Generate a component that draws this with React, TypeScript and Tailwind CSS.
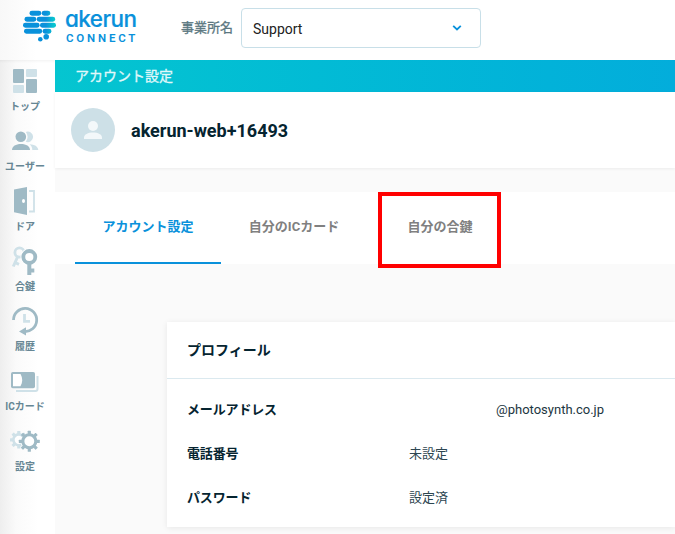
import type { ReactNode } from "react";

const DARK = "#9fbac5";
const LIGHT = "#cfe1e8";

function NavIcon({ children }: { children: ReactNode }) {
    return (
        <svg width="32" height="32" viewBox="0 0 32 32" fill="none">
            {children}
        </svg>
    );
}

function TopIcon() {
    return (
        <NavIcon>
            <rect x="4" y="4" width="11" height="14" rx="1" fill={DARK} />
            <rect x="17" y="4" width="11" height="8" rx="1" fill={LIGHT} />
            <rect x="17" y="14" width="11" height="14" rx="1" fill={DARK} />
            <rect x="4" y="20" width="11" height="8" rx="1" fill={LIGHT} />
        </NavIcon>
    );
}

function UsersIcon() {
    return (
        <NavIcon>
            <path d="M16.8 6.9a5.3 5.3 0 1 1 0 9.8a7.5 7.5 0 0 0 0-9.8z" fill={LIGHT} />
            <path d="M20.5 19.2c5 .2 8.5 2.2 8.8 5.8h-6c0-2.4-.8-4.3-2.8-5.8z" fill={LIGHT} />
            <circle cx="11.8" cy="11.8" r="5.3" fill={DARK} />
            <path d="M3 25c0-3.8 3.8-6 9-6s9 2.2 9 6z" fill={DARK} />
        </NavIcon>
    );
}

function DoorIcon() {
    return (
        <NavIcon>
            <path d="M20 6h5v20.5h-5" stroke={LIGHT} strokeWidth="1.8" />
            <path d="M5 4.5L18 2v28L5 27.3z" fill={DARK} />
            <ellipse cx="14.5" cy="16" rx="1.5" ry="2" fill="#fff" />
        </NavIcon>
    );
}

function KeysIcon() {
    return (
        <NavIcon>
            <g stroke={LIGHT}>
                <circle cx="10.5" cy="7.5" r="4.6" strokeWidth="2.8" />
                <path d="M8.5 12L4.3 21.5M6 17.5l4 1.8" strokeWidth="3" />
            </g>
            <circle cx="20.3" cy="12" r="8.8" fill="#fff" />
            <circle cx="20.3" cy="12" r="6" stroke={DARK} strokeWidth="3.8" />
            <path d="M20.3 18v12M20.3 25.5h5" stroke={DARK} strokeWidth="4" />
        </NavIcon>
    );
}

function HistoryIcon() {
    return (
        <NavIcon>
            <path d="M15.5 9v7.3H21" stroke={LIGHT} strokeWidth="2.8" />
            <path d="M4.5 15A11.6 11.6 0 1 1 15 26.5" stroke={DARK} strokeWidth="2.8" />
            <path d="M10 26.5l7-4.3v8.3z" fill={DARK} />
        </NavIcon>
    );
}

function CardIcon() {
    return (
        <NavIcon>
            <path d="M7 26h19.5a2 2 0 0 0 2-2V11" stroke={LIGHT} strokeWidth="2" />
            <rect x="2" y="7" width="24" height="16.3" rx="1.8" fill={DARK} />
            <path d="M4 9h7.5q3.5 6.2 0 12.3H4z" fill="#fff" />
        </NavIcon>
    );
}

interface GearProps {
    cx: number;
    cy: number;
    r: number;
    color: string;
}

function Gear({ cx, cy, r, color }: GearProps) {
    return (
        <g transform={`translate(${cx} ${cy})`}>
            {[0, 45, 90, 135].map((angle) => (
                <rect
                    key={angle}
                    x={-1.6}
                    y={-r}
                    width={3.2}
                    height={r * 2}
                    rx={0.5}
                    fill={color}
                    transform={`rotate(${angle})`}
                />
            ))}
            <circle r={r * 0.62} fill="#fff" stroke={color} strokeWidth={r * 0.3} />
        </g>
    );
}

function SettingsIcon() {
    return (
        <NavIcon>
            <Gear cx={9.8} cy={14.8} r={8.8} color={LIGHT} />
            <circle cx="20.3" cy="16.3" r="8.8" fill="#fff" />
            <Gear cx={20.3} cy={16.3} r={10.5} color={DARK} />
        </NavIcon>
    );
}

const navItems = [
    { label: "トップ", icon: <TopIcon /> },
    { label: "ユーザー", icon: <UsersIcon /> },
    { label: "ドア", icon: <DoorIcon /> },
    { label: "合鍵", icon: <KeysIcon /> },
    { label: "履歴", icon: <HistoryIcon /> },
    { label: "ICカード", icon: <CardIcon /> },
    { label: "設定", icon: <SettingsIcon /> },
];

const profileRows = [
    { label: "メールアドレス", value: "@photosynth.co.jp", valueClass: "pl-[87px] text-[#1c3641]" },
    { label: "電話番号", value: "未設定", valueClass: "text-[#2d4651]" },
    { label: "パスワード", value: "設定済", valueClass: "text-[#2d4651]" },
];

function Logo() {
    return (
        <div className="flex w-[181px] shrink-0 pl-[22px]">
            <svg width="36" height="34" viewBox="22 9 36 34" className="mt-[9px] shrink-0">
                <defs>
                    <linearGradient id="brain" gradientUnits="userSpaceOnUse" x1="46" y1="0" x2="54" y2="0">
                        <stop offset="0" stopColor="#0991db" />
                        <stop offset="1" stopColor="#09c6cf" />
                    </linearGradient>
                </defs>
                <g fill="url(#brain)">
                    <rect x="29.5" y="10.7" width="11.8" height="5" rx="2.4" />
                    <rect x="41.7" y="10.7" width="8.6" height="5" rx="2.4" />
                    <rect x="24.5" y="16.7" width="11.8" height="5" rx="2.4" />
                    <rect x="36.7" y="16.7" width="18.5" height="5" rx="2.4" />
                    <rect x="23" y="22.7" width="16.6" height="5" rx="2.4" />
                    <rect x="40" y="22.7" width="16" height="5" rx="2.4" />
                    <rect x="24" y="28.7" width="18.2" height="5" rx="2.4" />
                    <rect x="42.6" y="28.7" width="8.8" height="5" rx="2.4" />
                </g>
                <circle cx="46.2" cy="36.8" r="2.8" fill="#0991db" />
                <circle cx="40.3" cy="39.3" r="2.3" fill="#0991db" />
            </svg>
            <div className="ml-[7px] flex flex-col text-[#0991db]">
                <span className="mt-[7px] h-[25px] font-[Inter,sans-serif] text-[22.5px] leading-[24px] font-medium tracking-[-0.6px] [-webkit-text-stroke:0.2px_#0991db] [font-feature-settings:'cv11','ss03']">
                    akerun
                </span>
                <span className="ml-[1px] font-[Roboto,sans-serif] text-[11.5px] leading-[12px] font-semibold tracking-[2.8px]">
                    CONNECT
                </span>
            </div>
        </div>
    );
}

function Header() {
    return (
        <header className="flex h-[60px] shrink-0 bg-linear-to-r from-[#f8f8f8] to-white to-[36px]">
            <Logo />
            <div className="flex h-[56px] items-center">
                <span className="w-[60px] text-[13px] text-[#5b7780] [-webkit-text-stroke:0.3px_#5b7780]">事業所名</span>
                <div className="flex h-[40px] w-[240px] items-center justify-between rounded border border-[#c8dfe8] bg-white pt-[2px] pr-[18px] pl-[11px]">
                    <span className="text-[14px] text-[#222]">Support</span>
                    <svg width="10" height="8" viewBox="0 0 10 8" className="-mt-[3px]">
                        <path d="M1.2 1.8L5 5.5L8.8 1.8" fill="none" stroke="#0991db" strokeWidth="1.8" />
                    </svg>
                </div>
            </div>
        </header>
    );
}

function Sidebar() {
    return (
        <nav className="w-[55px] shrink-0 bg-linear-to-r from-[#eeeeee] via-[#fafafa] via-[16px] to-white to-[38px] pt-[5px] shadow-[inset_0_3px_3px_-2px_rgba(0,0,0,0.06)]">
            {navItems.map((item) => (
                <div key={item.label} className="flex h-[60px] w-[50px] flex-col items-center">
                    {item.icon}
                    <span className="mt-[3px] text-[10px] leading-[14px] font-bold whitespace-nowrap text-[#668694]">
                        {item.label}
                    </span>
                </div>
            ))}
        </nav>
    );
}

function Tabs() {
    return (
        <div className="mt-[24px] flex h-[72px] bg-white pl-[20px] text-[13px] leading-[70px] font-bold text-[#808080]">
            <div className="w-[146px] border-b-2 border-[#0991db] text-center text-[#0991db]">アカウント設定</div>
            <div className="w-[146px] text-center">自分のICカード</div>
            <div className="relative w-[146px] text-center">
                自分の合鍵
                <div className="absolute top-0 left-[11px] h-[76px] w-[123px] border-4 border-[#ff0000]" />
            </div>
        </div>
    );
}

export default function App() {
    return (
        <div className="flex h-[534px] w-[675px] flex-col overflow-hidden bg-white font-[Roboto,'Noto_Sans_CJK_JP',sans-serif]">
            <Header />
            <div className="flex min-h-0 flex-1">
                <Sidebar />
                <main className="min-w-0 flex-1 bg-[#fafafa]">
                    <div className="flex h-[32px] items-center bg-linear-to-r from-[#05c5d0] to-[#03addb] pl-[20px] text-[14px] text-[#e0f8fa] [-webkit-text-stroke:0.3px_#e0f8fa]">
                        アカウント設定
                    </div>
                    <div className="flex h-[76px] items-center bg-white pl-[16px] shadow-[0_1px_3px_rgba(0,0,0,0.06)]">
                        <svg width="44" height="44" viewBox="0 0 44 44">
                            <circle cx="22" cy="22" r="22" fill="#cde0e7" />
                            <circle cx="22" cy="18" r="5" fill="#f3f8fa" />
                            <path d="M13 31v-1.5c0-3 4-5 9-5s9 2 9 5V31z" fill="#f3f8fa" />
                        </svg>
                        <h1 className="ml-[16px] text-[18px] font-bold text-[#052430]">akerun-web+16493</h1>
                    </div>
                    <Tabs />
                    <section className="mt-[58px] ml-[112px] h-[205px] bg-white text-[#052430] shadow-[0_1px_6px_rgba(0,0,0,0.08)]">
                        <h2 className="h-[57px] border-b border-[#dbe9ef] pl-[20px] text-[14px] leading-[56px] font-bold">
                            プロフィール
                        </h2>
                        <dl className="pt-[9px] pl-[20px] text-[13px] leading-[44px]">
                            {profileRows.map((row) => (
                                <div key={row.label} className="flex h-[44px]">
                                    <dt className="w-[222px] font-bold tracking-[-0.15px]">{row.label}</dt>
                                    <dd className={row.valueClass}>{row.value}</dd>
                                </div>
                            ))}
                        </dl>
                    </section>
                </main>
            </div>
        </div>
    );
}
